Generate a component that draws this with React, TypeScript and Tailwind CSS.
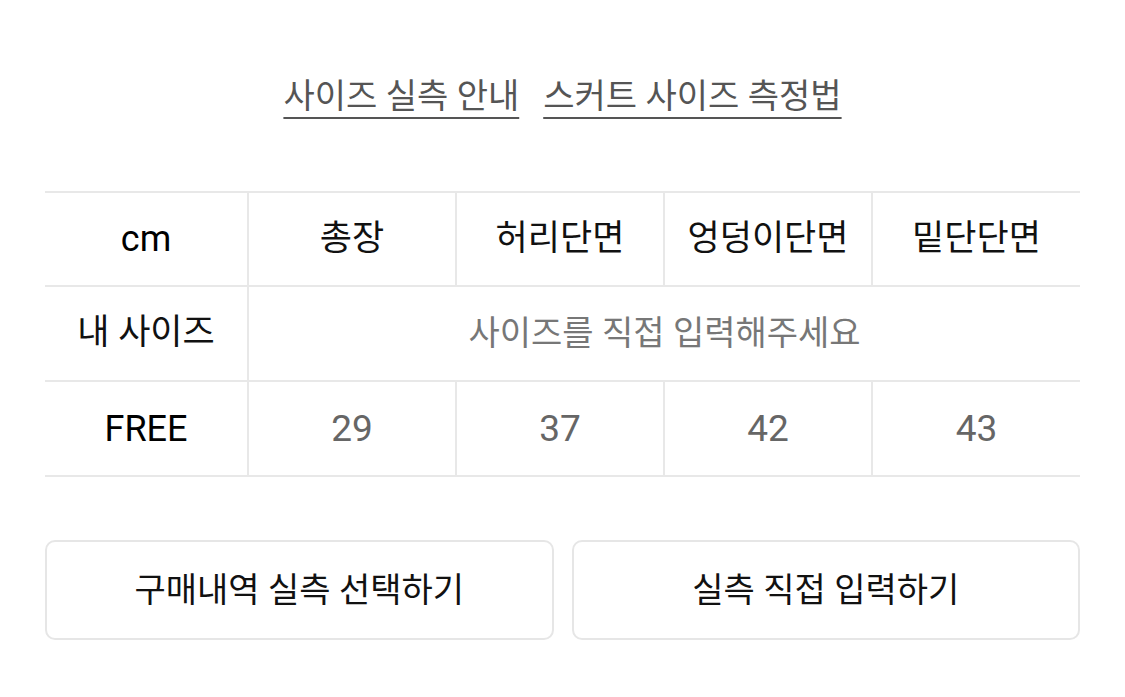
const FONT = "font-['Roboto','Noto_Sans_CJK_KR',sans-serif]";

const headers = ["총장", "허리단면", "엉덩이단면", "밑단단면"];
const free = ["29", "37", "42", "43"];

export default function App() {
  return (
    <div className={`${FONT} w-[1125px] h-[697px] bg-white px-[45px]`}>
      <div className="flex justify-center gap-[24px] pt-[72px] text-[34px] leading-[48px] text-[#555]">
        <span className="underline decoration-2 underline-offset-[9px]">사이즈 실측 안내</span>
        <span className="underline decoration-2 underline-offset-[9px]">스커트 사이즈 측정법</span>
      </div>

      <table className="mt-[71px] w-[1035px] table-fixed border-collapse text-[35px]">
        <colgroup>
          <col className="w-[203px]" />
          <col />
          <col />
          <col />
          <col />
        </colgroup>
        <tbody>
          <tr className="h-[94px]">
            <td className="border-y-2 border-r-2 border-[#e8e8e8] text-center text-[36px] text-black">cm</td>
            {headers.map((h, i) => (
              <td
                key={h}
                className={`border-2 border-[#e8e8e8] text-center text-[#111] ${i === 3 ? "border-r-0" : ""}`}
              >
                {h}
              </td>
            ))}
          </tr>
          <tr className="h-[95px]">
            <td className="border-y-2 border-r-2 border-[#e8e8e8] text-center text-[#111]">내 사이즈</td>
            <td colSpan={4} className="border-y-2 border-[#e8e8e8] text-center text-[34px] text-[#777]">
              사이즈를 직접 입력해주세요
            </td>
          </tr>
          <tr className="h-[95px]">
            <td className="border-y-2 border-r-2 border-[#e8e8e8] text-center text-[36px] text-black">FREE</td>
            {free.map((v, i) => (
              <td
                key={i}
                className={`border-2 border-[#e8e8e8] text-center text-[37px] text-[#666] ${i === 3 ? "border-r-0" : ""}`}
              >
                {v}
              </td>
            ))}
          </tr>
        </tbody>
      </table>

      <div className="mt-[63px] grid grid-cols-2 gap-[18px]">
        {["구매내역 실측 선택하기", "실측 직접 입력하기"].map((t) => (
          <button
            key={t}
            type="button"
            className="h-[100px] rounded-[10px] border-2 border-[#e6e6e6] bg-white text-[34px] text-[#111]"
          >
            {t}
          </button>
        ))}
      </div>
    </div>
  );
}
